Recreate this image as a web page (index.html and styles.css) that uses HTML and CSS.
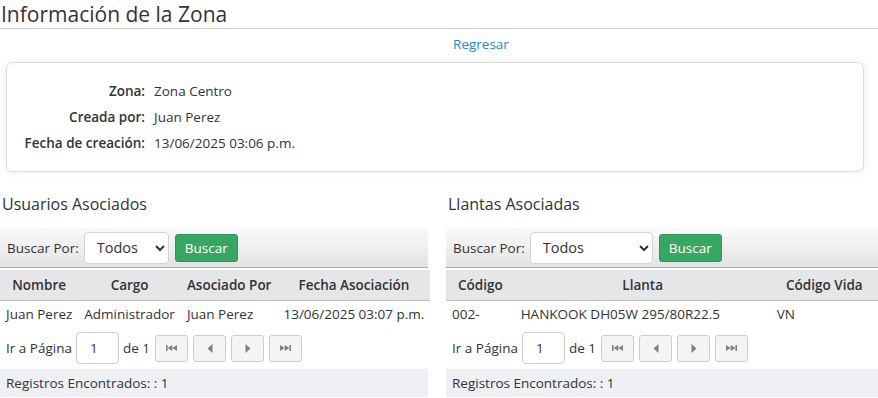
FILE: index.html
```html
<!DOCTYPE html>
<html lang="es">
<head>
    <meta charset="UTF-8">
    <meta name="viewport" content="width=device-width, initial-scale=1.0">
    <title>Información de la Zona</title>
    <link rel="stylesheet" href="styles.css">
</head>
<body>
    <h1 class="page-title">Información de la Zona</h1>
    <div class="back"><a href="#">Regresar</a></div>

    <div class="card">
        <div class="info">
            <span class="info-label">Zona:</span><span>Zona Centro</span>
            <span class="info-label">Creada por:</span><span>Juan Perez</span>
            <span class="info-label">Fecha de creación:</span><span>13/06/2025 03:06 p.m.</span>
        </div>
    </div>

    <div class="panels">
        <section class="panel">
            <h2>Usuarios Asociados</h2>
            <div class="toolbar">
                <label>Buscar Por:</label>
                <select class="select-left"><option>Todos</option></select>
                <button class="btn-search">Buscar</button>
            </div>
            <table class="grid">
                <thead>
                    <tr><th>Nombre</th><th>Cargo</th><th>Asociado Por</th><th>Fecha Asociación</th></tr>
                </thead>
                <tbody>
                    <tr><td>Juan Perez</td><td>Administrador</td><td>Juan Perez</td><td>13/06/2025 03:07 p.m.</td></tr>
                </tbody>
            </table>
            <div class="pager">
                <span>Ir a Página</span>
                <input type="text" value="1">
                <span>de 1</span>
                <div class="pager-buttons">
                    <button class="page-btn"><svg width="11" height="6" viewBox="0 0 11 6"><rect x="0" y="0" width="1.6" height="6"/><path d="M1.6 3 6.3 0v6z"/><path d="M6.3 3 11 0v6z"/></svg></button>
                    <button class="page-btn"><svg width="6" height="9" viewBox="0 0 6 9"><path d="M0.5 4.5 5.5 0v9z"/></svg></button>
                    <button class="page-btn"><svg width="6" height="9" viewBox="0 0 6 9"><path d="M5.5 4.5 0.5 0v9z"/></svg></button>
                    <button class="page-btn"><svg width="11" height="6" viewBox="0 0 11 6"><path d="M0 0 4.7 3 0 6z"/><path d="M4.7 0 9.4 3 4.7 6z"/><rect x="9.4" y="0" width="1.6" height="6"/></svg></button>
                </div>
            </div>
            <div class="grid-footer">Registros Encontrados: : 1</div>
        </section>

        <section class="panel">
            <h2>Llantas Asociadas</h2>
            <div class="toolbar">
                <label>Buscar Por:</label>
                <select class="select-right"><option>Todos</option></select>
                <button class="btn-search">Buscar</button>
            </div>
            <table class="grid">
                <thead>
                    <tr><th>Código</th><th>Llanta</th><th>Código Vida</th></tr>
                </thead>
                <tbody>
                    <tr><td>002-</td><td>HANKOOK DH05W 295/80R22.5</td><td>VN</td></tr>
                </tbody>
            </table>
            <div class="pager">
                <span>Ir a Página</span>
                <input type="text" value="1">
                <span>de 1</span>
                <div class="pager-buttons">
                    <button class="page-btn"><svg width="11" height="6" viewBox="0 0 11 6"><rect x="0" y="0" width="1.6" height="6"/><path d="M1.6 3 6.3 0v6z"/><path d="M6.3 3 11 0v6z"/></svg></button>
                    <button class="page-btn"><svg width="6" height="9" viewBox="0 0 6 9"><path d="M0.5 4.5 5.5 0v9z"/></svg></button>
                    <button class="page-btn"><svg width="6" height="9" viewBox="0 0 6 9"><path d="M5.5 4.5 0.5 0v9z"/></svg></button>
                    <button class="page-btn"><svg width="11" height="6" viewBox="0 0 11 6"><path d="M0 0 4.7 3 0 6z"/><path d="M4.7 0 9.4 3 4.7 6z"/><rect x="9.4" y="0" width="1.6" height="6"/></svg></button>
                </div>
            </div>
            <div class="grid-footer">Registros Encontrados: : 1</div>
        </section>
    </div>
</body>
</html>
```

FILE: styles.css
```css
body {
    margin: 0;
    font-family: "Open Sans", sans-serif;
    font-size: 13.5px;
    color: #333;
    background: #fff;
}
.page-title {
    margin: 0;
    padding: 0 0 0 1px;
    font-size: 21px;
    font-weight: normal;
    line-height: 28px;
    border-bottom: 1px solid #ccc;
}
.back {
    text-align: center;
    padding: 7px 0 0 84px;
    height: 26px;
    line-height: 16px;
}
.back a {
    color: #1a8bd0;
    text-decoration: none;
}
.card {
    margin: 0 14px 0 6px;
    padding: 15px 0;
    background: #fff;
    border: 1px solid #dcdcdc;
    border-radius: 7px;
    box-shadow: 0 0 8px rgba(0, 0, 0, 0.08);
}
.info {
    display: grid;
    grid-template-columns: 138px auto;
    column-gap: 9px;
    grid-auto-rows: 26px;
    align-items: center;
}
.info-label {
    text-align: right;
    font-weight: 600;
}
.panels {
    display: grid;
    grid-template-columns: 428px 432px;
    column-gap: 18px;
    margin-top: 22px;
}
.panel h2 {
    margin: 0 0 14px 2px;
    font-size: 16px;
    font-weight: normal;
    line-height: 20px;
}
.toolbar {
    display: flex;
    align-items: center;
    gap: 6px;
    height: 39px;
    padding: 0 7px;
    background: linear-gradient(#fafafa, #e3e3e3);
    border-bottom: 1px solid #a9a9a9;
}
.toolbar label {
    margin-right: -1px;
}
.toolbar select {
    height: 32px;
    padding: 0 6px 0 8px;
    font-family: inherit;
    font-size: 14.5px;
    color: #333;
    background: #fff;
    border: 1px solid #d4d4d4;
    border-radius: 4px;
}
.select-left {
    width: 85px;
}
.select-right {
    width: 123px;
}
.btn-search {
    height: 28px;
    padding: 0 9px;
    font-family: inherit;
    font-size: 13.5px;
    color: #fff;
    background: #38a663;
    border: 1px solid #2f9457;
    border-radius: 3px;
}
.grid {
    width: 100%;
    margin-top: 2px;
    border-collapse: collapse;
}
.grid th {
    height: 30px;
    padding: 0 6px;
    font-weight: 600;
    text-align: center;
    background: #e5e6e8;
    border-bottom: 1px solid #bcbcbc;
    white-space: nowrap;
}
.grid td {
    height: 25px;
    padding: 0 6px;
    white-space: nowrap;
}
.pager {
    display: flex;
    align-items: center;
    gap: 4px;
    padding: 5px 6px 0;
    height: 34px;
}
.pager input {
    width: 43px;
    height: 32px;
    box-sizing: border-box;
    padding: 0 0 0 13px;
    font-family: inherit;
    font-size: 13.5px;
    color: #333;
    border: 1px solid #ccc;
    border-radius: 4px;
}
.pager-buttons {
    display: flex;
    gap: 5px;
    margin-left: 1px;
}
.page-btn {
    display: flex;
    align-items: center;
    justify-content: center;
    width: 33px;
    height: 27px;
    padding: 0;
    background: #f4f4f4;
    border: 1px solid #ccc;
    border-radius: 3px;
}
.page-btn svg {
    fill: #7d8088;
}
.grid-footer {
    margin-top: 4px;
    height: 28px;
    line-height: 28px;
    padding: 0 6px;
    background: #eff0f3;
}
```
